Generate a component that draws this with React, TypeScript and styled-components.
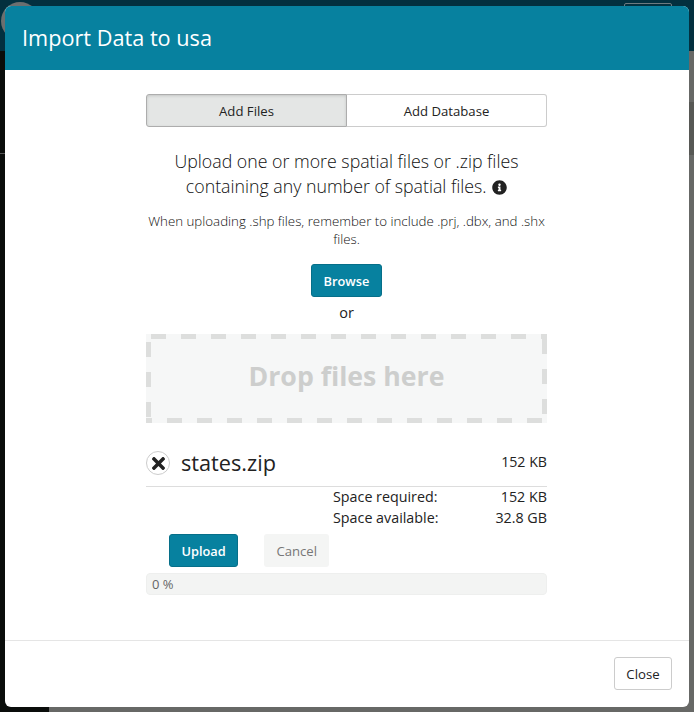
import styled, { createGlobalStyle } from 'styled-components';
import { FaInfoCircle, FaTimes } from 'react-icons/fa';

const GlobalStyle = createGlobalStyle`
  html, body {
    margin: 0;
    padding: 0;
    height: 100%;
    background: #0a0d0b;
  }
  * {
    box-sizing: border-box;
  }
`;

const Page = styled.div`
  position: relative;
  width: 694px;
  height: 712px;
  overflow: hidden;
  display: flex;
  flex-direction: column;
  font-family: 'Open Sans', 'Liberation Sans', sans-serif;
  color: #222;
`;

const TopBar = styled.div`
  height: 51px;
  flex: none;
  background: #03303f;
  position: relative;
  display: flex;
  justify-content: flex-end;
  padding: 3px 22px 0 0;
`;

const Avatar = styled.div`
  position: absolute;
  left: 1px;
  top: 2px;
  width: 38px;
  height: 38px;
  border-radius: 50%;
  background: #6b6f70;
`;

const TopButton = styled.div`
  width: 48px;
  height: 20px;
  border: 1px solid #6d7a80;
  border-radius: 2px;
`;

const Backdrop = styled.div`
  flex: 1;
  display: flex;
`;

const Sidebar = styled.div`
  width: 49px;
  background: linear-gradient(#0a0d0b 0 102px, #555 102px 103px, #0a0d0b 103px);
`;

const Dimmed = styled.div`
  flex: 1;
  background: linear-gradient(#676866 0 51px, #575855 51px 104px, #676866 104px);
`;

const Modal = styled.div`
  position: absolute;
  left: 5px;
  top: 6px;
  width: 684px;
  height: 701px;
  background: #fff;
  border-radius: 6px;
  overflow: hidden;
  display: flex;
  flex-direction: column;
`;

const Header = styled.div`
  height: 64px;
  flex: none;
  background: #07819f;
  color: #fff;
  display: flex;
  align-items: center;
  padding: 0 17px 2px;
  font-size: 21.7px;
  font-weight: 400;
`;

const Body = styled.div`
  flex: 1;
  padding: 24px 142px 0 141px;
  display: flex;
  flex-direction: column;
`;

const Tabs = styled.div`
  display: flex;
  height: 33px;
  flex: none;
`;

const Tab = styled.div<{ $active?: boolean }>`
  flex: 1;
  display: flex;
  align-items: center;
  justify-content: center;
  font-size: 13.15px;
  color: #222;
  background: ${(p) => (p.$active ? '#e4e6e5' : '#fff')};
  border: 1px solid ${(p) => (p.$active ? '#adadad' : '#ccc')};
  border-radius: ${(p) => (p.$active ? '3px 0 0 3px' : '0 3px 3px 0')};
  border-left-width: ${(p) => (p.$active ? '1px' : '0')};
  box-shadow: ${(p) => (p.$active ? 'inset 0 1px 3px rgba(0, 0, 0, 0.14)' : 'none')};
`;

const Lead = styled.div`
  margin-top: 22px;
  text-align: center;
  font-size: 17.75px;
  line-height: 25px;
  font-weight: 300;
  color: #111;
`;

const InfoIcon = styled(FaInfoCircle)`
  width: 15px;
  height: 15px;
  vertical-align: -2px;
  margin-left: 1px;
  color: #222;
`;

const Note = styled.div`
  margin-top: 13px;
  text-align: center;
  font-size: 13.3px;
  line-height: 18px;
  color: #111;
  font-weight: 300;
`;

const BrowseRow = styled.div`
  margin-top: 16px;
  display: flex;
  justify-content: center;
`;

const PrimaryButton = styled.div`
  height: 33px;
  padding: 0 11.5px;
  display: flex;
  align-items: center;
  background: #07819f;
  border: 1px solid #066f89;
  border-radius: 3px;
  color: #fff;
  font-size: 12.8px;
  font-weight: 600;
`;

const Or = styled.div`
  margin-top: 6px;
  text-align: center;
  font-size: 14.5px;
  line-height: 20px;
  color: #222;
`;

const dash = '#dddedd';

const DropZone = styled.div`
  margin-top: 11px;
  height: 89px;
  flex: none;
  display: flex;
  align-items: center;
  justify-content: center;
  padding-bottom: 6px;
  background-color: #f6f7f7;
  background-image:
    linear-gradient(90deg, transparent 0 5px, ${dash} 5px 20px, transparent 20px 30px),
    linear-gradient(90deg, ${dash} 0 6px, transparent 6px 21px, ${dash} 21px 30px),
    linear-gradient(transparent 0 8px, ${dash} 8px 23px, transparent 23px 30px),
    linear-gradient(transparent 0 5px, ${dash} 5px 20px, transparent 20px 30px);
  background-size: 30px 5px, 30px 5px, 5px 30px, 5px 30px;
  background-position: left top, left bottom, left top, right top;
  background-repeat: repeat-x, repeat-x, repeat-y, repeat-y;
  font-size: 26.7px;
  font-weight: 700;
  color: #cdcecd;
`;

const FileRow = styled.div`
  margin-top: 23px;
  height: 41px;
  flex: none;
  display: flex;
  align-items: flex-start;
  border-bottom: 1px solid #ddd;
`;

const RemoveButton = styled.div`
  width: 24px;
  height: 24px;
  flex: none;
  margin-top: 5px;
  border: 1px solid #ccc;
  border-radius: 50%;
  display: flex;
  align-items: center;
  justify-content: center;
  color: #222;
`;

const FileName = styled.div`
  margin-left: 11px;
  font-size: 21.7px;
  line-height: 34px;
  flex: 1;
  color: #222;
`;

const FileSize = styled.div`
  font-size: 14.2px;
  line-height: 20px;
  margin-top: 6px;
  color: #222;
`;

const Summary = styled.div`
  margin-top: -1px;
  display: grid;
  grid-template-columns: 187px 1fr 1fr;
  font-size: 14.3px;
  line-height: 21px;
  color: #222;
`;

const SummaryLabel = styled.div`
  grid-column: 2;
  white-space: nowrap;
`;

const SummaryValue = styled.div`
  grid-column: 3;
  text-align: right;
`;

const UploadActions = styled.div`
  margin-top: 6px;
  padding-left: 23px;
  display: flex;
  gap: 26px;
`;

const CancelButton = styled.div`
  height: 33px;
  width: 65px;
  display: flex;
  align-items: center;
  justify-content: center;
  background: #f4f5f4;
  border-radius: 3px;
  color: #777;
  font-size: 13.15px;
`;

const Progress = styled.div`
  margin-top: 6px;
  height: 22px;
  flex: none;
  background: #f3f4f3;
  border: 1px solid #eeefee;
  border-radius: 4px;
  padding-left: 5px;
  display: flex;
  align-items: center;
  font-size: 13px;
  color: #666;
`;

const Footer = styled.div`
  flex: none;
  height: 67px;
  border-top: 1px solid #e5e5e5;
  display: flex;
  justify-content: flex-end;
  align-items: flex-start;
  padding: 16px 17px 0 0;
`;

const CloseButton = styled.div`
  width: 58px;
  height: 33px;
  display: flex;
  align-items: center;
  justify-content: center;
  background: #fff;
  border: 1px solid #ccc;
  border-radius: 3px;
  font-size: 13.2px;
  color: #222;
`;

export default function App() {
  return (
    <Page>
      <GlobalStyle />
      <TopBar>
        <Avatar />
        <TopButton />
      </TopBar>
      <Backdrop>
        <Sidebar />
        <Dimmed />
      </Backdrop>

      <Modal>
        <Header>Import Data to usa</Header>
        <Body>
          <Tabs>
            <Tab $active>Add Files</Tab>
            <Tab>Add Database</Tab>
          </Tabs>
          <Lead>
            Upload one or more spatial files or .zip files
            <br />
            containing any number of spatial files. <InfoIcon />
          </Lead>
          <Note>When uploading .shp files, remember to include .prj, .dbx, and .shx files.</Note>
          <BrowseRow>
            <PrimaryButton>Browse</PrimaryButton>
          </BrowseRow>
          <Or>or</Or>
          <DropZone>Drop files here</DropZone>
          <FileRow>
            <RemoveButton>
              <FaTimes size={19} />
            </RemoveButton>
            <FileName>states.zip</FileName>
            <FileSize>152 KB</FileSize>
          </FileRow>
          <Summary>
            <SummaryLabel>Space required:</SummaryLabel>
            <SummaryValue>152 KB</SummaryValue>
            <SummaryLabel>Space available:</SummaryLabel>
            <SummaryValue>32.8 GB</SummaryValue>
          </Summary>
          <UploadActions>
            <PrimaryButton>Upload</PrimaryButton>
            <CancelButton>Cancel</CancelButton>
          </UploadActions>
          <Progress>0 %</Progress>
        </Body>
        <Footer>
          <CloseButton>Close</CloseButton>
        </Footer>
      </Modal>
    </Page>
  );
}
